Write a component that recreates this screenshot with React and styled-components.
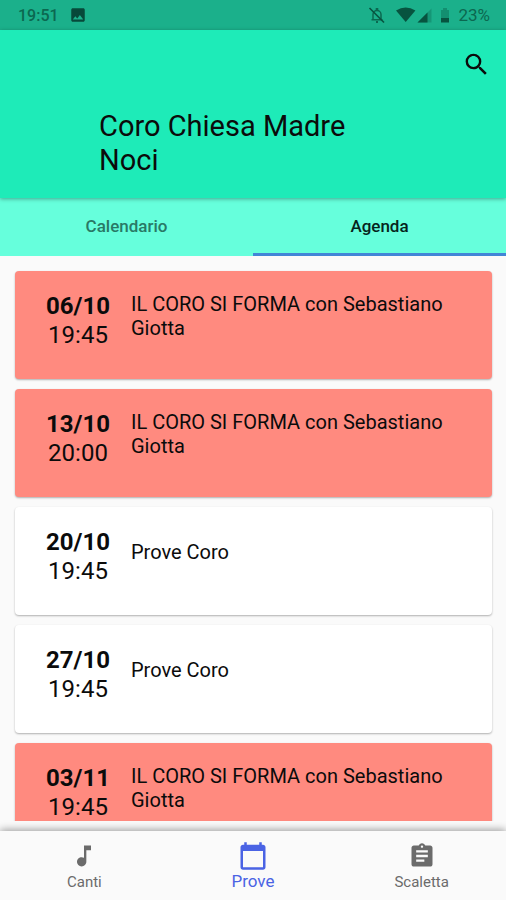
import React, { useState } from 'react'
import styled, { createGlobalStyle, ThemeProvider } from 'styled-components';
import {
  MdSearch, MdImage, MdMusicNote, MdAssignment, MdCalendarToday
} from 'react-icons/md'

const theme = {
  colors: {
    status: '#1bb08b',
    statusText: '#0b6850',
    header: '#1eebb8',
    tabs: '#66ffdc',
    tabLine: '#4285d6',
    text: '#0b0b0b',
    muted: '#6b6b6b',
    primary: '#4a63e4',
    alert: '#ff8a7f',
    bg: '#fafafa',
  },
}

const events = [
  { date: '06/10', time: '19:45', title: 'IL CORO SI FORMA con Sebastiano Giotta', alert: true },
  { date: '13/10', time: '20:00', title: 'IL CORO SI FORMA con Sebastiano Giotta', alert: true },
  { date: '20/10', time: '19:45', title: 'Prove Coro', alert: false },
  { date: '27/10', time: '19:45', title: 'Prove Coro', alert: false },
  { date: '03/11', time: '19:45', title: 'IL CORO SI FORMA con Sebastiano Giotta', alert: true },
]

const pages = [
  { name: 'Canti', Icon: MdMusicNote },
  { name: 'Prove', Icon: MdCalendarToday },
  { name: 'Scaletta', Icon: MdAssignment },
]

const StatusIcons = () => (
  <svg width="64" height="20" viewBox="0 0 64 20" aria-hidden="true">
    <path d="M5 14.500V9.500a4 4 0 0 1 8 0v5M3.500 14.800h11" fill="none" stroke="currentColor" strokeWidth="1.500" />
    <path d="M7.700 4h2.600M8 17h2" stroke="currentColor" strokeWidth="2" />
    <path d="M1.500 3l14.500 14.500" stroke="#07533f" strokeWidth="1.600" />
    <path d="M28 5.500q9.700-6 19.400 0L37.700 17z" className="dark" />
    <path d="M49.500 17.500L63.500 3.500v14z" opacity="0.35" fill="currentColor" />
    <path d="M49.500 17.500L59.500 7.500v10z" className="dark" />
  </svg>
)

const BatteryIcon = () => (
  <svg width="10" height="20" viewBox="0 0 10 20" aria-hidden="true">
    <path d="M3 3h4v2h2v8H1V5h2z" opacity="0.45" fill="currentColor" />
    <path d="M1 13h8v4.500H1z" className="dark" />
  </svg>
)

const App = () => {
  const [tab, setTab] = useState('Agenda')
  const [page, setPage] = useState('Prove')

  return (
    <ThemeProvider theme={theme}>
      <GlobalStyle />
      <Screen>
        <StatusBar>
          <span>19:51</span>
          <MdImage className="image" />
          <div className="right">
            <StatusIcons />
            <BatteryIcon />
            <span className="battery">23%</span>
          </div>
        </StatusBar>

        <Header>
          <SearchButton aria-label="Cerca"><MdSearch /></SearchButton>
          <h1>Coro Chiesa Madre Noci</h1>
        </Header>

        <Tabs role="tablist">
          {['Calendario', 'Agenda'].map((name) => (
            <Tab key={name} role="tab" aria-selected={tab === name}
              $active={tab === name} onClick={() => setTab(name)}>
              {name}
            </Tab>
          ))}
        </Tabs>

        <EventList>
          {events.map((event) => (
            <EventCard key={event.date} $alert={event.alert}>
              <When>
                <strong>{event.date}</strong>
                <span>{event.time}</span>
              </When>
              <EventTitle>{event.title}</EventTitle>
            </EventCard>
          ))}
        </EventList>

        <BottomNav>
          {pages.map(({ name, Icon }) => (
            <NavButton key={name} $active={page === name} onClick={() => setPage(name)}>
              <Icon className="icon" />
              <span>{name}</span>
            </NavButton>
          ))}
        </BottomNav>
      </Screen>
    </ThemeProvider>
  )
};

const GlobalStyle = createGlobalStyle`
  * {
    box-sizing: border-box;
  }
  body {
    margin: 0;
    background: ${({ theme }) => theme.colors.bg};
    color: ${({ theme }) => theme.colors.text};
    font-family: Roboto, "Liberation Sans", sans-serif;
  }
  button {
    border: none;
    padding: 0;
    background: none;
    color: inherit;
    font-family: inherit;
    cursor: pointer;
  }
`;

const Screen = styled.div`
  display: flex;
  flex-direction: column;
  height: 100vh;
`;

const StatusBar = styled.div`
  display: flex;
  align-items: center;
  flex-shrink: 0;
  height: 30px;
  padding: 0 16px 0 18px;
  background: ${({ theme }) => theme.colors.status};
  color: ${({ theme }) => theme.colors.statusText};
  font-size: 16px;
  font-weight: 500;

  .image {
    margin-left: 10px;
    font-size: 18px;
    color: #07493a;
  }
  .right {
    display: flex;
    align-items: center;
    gap: 8px;
    margin-left: auto;
  }
  .battery {
    font-weight: 400;
    font-size: 17px;
  }
  .dark {
    fill: #07533f;
  }
`;

const Header = styled.header`
  display: flex;
  flex-direction: column;
  flex-shrink: 0;
  height: 168px;
  padding: 20px 15px 0 99px;
  background: ${({ theme }) => theme.colors.header};
  box-shadow: 0 1px 4px rgba(0, 0, 0, 0.35);
  z-index: 1;

  h1 {
    max-width: 270px;
    margin: 30px 0 0;
    font-size: 29px;
    font-weight: 400;
    line-height: 34px;
  }
`;

const SearchButton = styled.button`
  display: flex;
  align-self: flex-end;
  font-size: 29px;
`;

const Tabs = styled.div`
  display: flex;
  flex-shrink: 0;
  height: 58px;
  background: ${({ theme }) => theme.colors.tabs};
`;

const Tab = styled.button`
  flex: 1;
  border-top: 1px solid transparent;
  border-bottom: 3px solid ${({ $active, theme }) => ($active ? theme.colors.tabLine : 'transparent')};
  color: ${({ $active }) => ($active ? '#06241c' : '#297966')};
  font-size: 17px;
  font-weight: 500;
`;

const EventList = styled.main`
  display: flex;
  flex: 1;
  flex-direction: column;
  gap: 10px;
  min-height: 0;
  padding: 15px 14px 0 15px;
  overflow-y: auto;
  scrollbar-width: none;
`;

const EventCard = styled.article`
  display: flex;
  flex-shrink: 0;
  align-items: center;
  gap: 20px;
  padding: 21px 30px 29px;
  border-radius: 4px;
  background: ${({ $alert, theme }) => ($alert ? theme.colors.alert : '#fff')};
  box-shadow: 0 1px 2px rgba(0, 0, 0, 0.3);
`;

const When = styled.div`
  display: flex;
  flex-direction: column;
  flex-shrink: 0;
  align-items: center;
  width: 66px;
  font-size: 24px;
  line-height: 29px;
`;

const EventTitle = styled.p`
  max-width: 320px;
  margin: 0 0 10px;
  font-size: 20px;
  line-height: 24px;
`;

const BottomNav = styled.nav`
  display: flex;
  flex-shrink: 0;
  height: 69px;
  margin-top: 10px;
  background: ${({ theme }) => theme.colors.bg};
  box-shadow: 0 -1px 8px rgba(0, 0, 0, 0.4);
`;

const NavButton = styled.button`
  display: flex;
  flex: 1;
  flex-direction: column;
  align-items: center;
  padding-top: ${({ $active }) => ($active ? '10px' : '11px')};
  color: ${({ $active, theme }) => ($active ? theme.colors.primary : theme.colors.muted)};
  font-size: ${({ $active }) => ($active ? '17px' : '15px')};
  line-height: ${({ $active }) => ($active ? '20px' : '24px')};

  .icon {
    font-size: ${({ $active }) => ($active ? '30px' : '28px')};
  }
`;

export default App;
